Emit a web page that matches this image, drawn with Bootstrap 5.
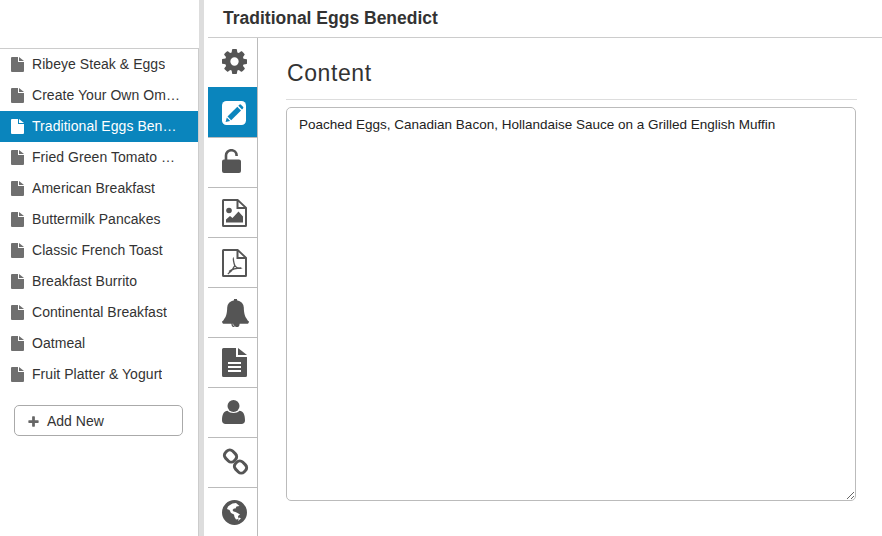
<!DOCTYPE html>
<html lang="en"><head><meta charset="utf-8"><title>Traditional Eggs Benedict</title>
<link href="https://cdn.jsdelivr.net/npm/bootstrap@5.3.0/dist/css/bootstrap.min.css" rel="stylesheet">
<style>
html,body{height:100%;overflow:hidden}
body{font-family:"Liberation Sans",Arial,sans-serif;font-size:14px;color:#333;background:#fff}
.shell{height:536px}
.side{width:199px;padding-top:48px;flex:none}
.side-list{border-top:1px solid #ccc;border-right:1px solid #ccc;height:488px}
.list-group .side-item{height:31px;padding:0 16px 0 11px;border:0;margin:0;color:#333;display:flex;align-items:center;gap:8px;background:transparent;border-radius:0;letter-spacing:.05px}
.list-group .side-item.active{background:#0a85bd;color:#fff;margin:0;border:0}
.side-item svg{width:13px;height:15px;flex:none;fill:#6f6f6f}
.side-item.active svg{fill:#fff}
.add-btn{margin:15px 15px 0 14px;height:31px;width:169px;border:1px solid #aaa;border-radius:5px;color:#333;font-size:14px;padding:1px 0 0 13px;display:flex;align-items:center;gap:8px;background:#fff}
.add-btn svg{width:11px;height:11px;fill:#666}
.divider{width:5px;background:#ddd;flex:none}
.mainpane{margin-left:4px;min-width:0}
.topbar{height:38px;border-bottom:1px solid #ccc;padding-left:15px;font-size:17.5px;font-weight:700;color:#333;line-height:37px}
.tabs{width:50px;border-right:1px solid #bbb;flex:none}
.tab-cell{height:50px;border-bottom:1px solid #bbb;padding-left:14px;display:flex;align-items:center;color:#555}
.tab-cell svg{fill:#555;display:block}
.tab-cell.before-on{border-bottom-color:#0a85bd}
.tab-cell.on{background:#0a85bd}
.tab-cell .lift{margin-top:-4px}
.tab-cell .lift-sm{margin-top:-2px}
.editor{padding:0 26px 0 28px;min-width:0}
.editor-title{font-size:23px;font-weight:400;letter-spacing:.6px;margin:0 -1px 0 0;height:62px;padding:22px 0 0 1px;line-height:27px;color:#333;border-bottom:1px solid #ddd}
.editor-area{margin-top:7px;width:570px;height:394px;border:1px solid #bbb;border-radius:5px;padding:8px 12px;font-size:13.5px;color:#222;box-shadow:none;line-height:18px;font-family:inherit}
</style></head><body>
<div class="shell d-flex">
 <div class="side">
  <div class="side-list">
   <div class="list-group list-group-flush">
    <a class="list-group-item side-item"><svg viewBox="0 0 13 15"><path d="M0 1a1 1 0 0 1 1-1h6v5h6v9a1 1 0 0 1-1 1H1a1 1 0 0 1-1-1zM8 0l5 4H8z"/></svg><span class="text-truncate">Ribeye Steak &amp; Eggs</span></a>
    <a class="list-group-item side-item"><svg viewBox="0 0 13 15"><path d="M0 1a1 1 0 0 1 1-1h6v5h6v9a1 1 0 0 1-1 1H1a1 1 0 0 1-1-1zM8 0l5 4H8z"/></svg><span class="text-truncate">Create Your Own Omelette</span></a>
    <a class="list-group-item side-item active"><svg viewBox="0 0 13 15"><path d="M0 1a1 1 0 0 1 1-1h6v5h6v9a1 1 0 0 1-1 1H1a1 1 0 0 1-1-1zM8 0l5 4H8z"/></svg><span class="text-truncate">Traditional Eggs Benedict</span></a>
    <a class="list-group-item side-item"><svg viewBox="0 0 13 15"><path d="M0 1a1 1 0 0 1 1-1h6v5h6v9a1 1 0 0 1-1 1H1a1 1 0 0 1-1-1zM8 0l5 4H8z"/></svg><span class="text-truncate">Fried Green Tomato Benedict</span></a>
    <a class="list-group-item side-item"><svg viewBox="0 0 13 15"><path d="M0 1a1 1 0 0 1 1-1h6v5h6v9a1 1 0 0 1-1 1H1a1 1 0 0 1-1-1zM8 0l5 4H8z"/></svg><span class="text-truncate">American Breakfast</span></a>
    <a class="list-group-item side-item"><svg viewBox="0 0 13 15"><path d="M0 1a1 1 0 0 1 1-1h6v5h6v9a1 1 0 0 1-1 1H1a1 1 0 0 1-1-1zM8 0l5 4H8z"/></svg><span class="text-truncate">Buttermilk Pancakes</span></a>
    <a class="list-group-item side-item"><svg viewBox="0 0 13 15"><path d="M0 1a1 1 0 0 1 1-1h6v5h6v9a1 1 0 0 1-1 1H1a1 1 0 0 1-1-1zM8 0l5 4H8z"/></svg><span class="text-truncate">Classic French Toast</span></a>
    <a class="list-group-item side-item"><svg viewBox="0 0 13 15"><path d="M0 1a1 1 0 0 1 1-1h6v5h6v9a1 1 0 0 1-1 1H1a1 1 0 0 1-1-1zM8 0l5 4H8z"/></svg><span class="text-truncate">Breakfast Burrito</span></a>
    <a class="list-group-item side-item"><svg viewBox="0 0 13 15"><path d="M0 1a1 1 0 0 1 1-1h6v5h6v9a1 1 0 0 1-1 1H1a1 1 0 0 1-1-1zM8 0l5 4H8z"/></svg><span class="text-truncate">Continental Breakfast</span></a>
    <a class="list-group-item side-item"><svg viewBox="0 0 13 15"><path d="M0 1a1 1 0 0 1 1-1h6v5h6v9a1 1 0 0 1-1 1H1a1 1 0 0 1-1-1zM8 0l5 4H8z"/></svg><span class="text-truncate">Oatmeal</span></a>
    <a class="list-group-item side-item"><svg viewBox="0 0 13 15"><path d="M0 1a1 1 0 0 1 1-1h6v5h6v9a1 1 0 0 1-1 1H1a1 1 0 0 1-1-1zM8 0l5 4H8z"/></svg><span class="text-truncate">Fruit Platter &amp; Yogurt</span></a>
   </div>
   <button type="button" class="btn add-btn"><svg viewBox="0 0 12 12"><path d="M4.500 1a.6.6 0 0 1 .6-.6h1.800a.6.6 0 0 1 .6.6v3.500H11a.6.6 0 0 1 .6.6v1.800a.6.6 0 0 1-.6.6H7.500V11a.6.6 0 0 1-.6.6H5.100a.6.6 0 0 1-.6-.6V7.500H1a.6.6 0 0 1-.6-.6V5.100a.6.6 0 0 1 .6-.6h3.500z"/></svg>Add New</button>
  </div>
 </div>
 <div class="divider"></div>
 <div class="mainpane flex-grow-1 d-flex flex-column">
  <div class="topbar">Traditional Eggs Benedict</div>
  <div class="d-flex flex-grow-1">
   <div class="tabs">
    <div class="tab-cell before-on"><svg class="lift-sm" width="25" height="25" viewBox="128 128 1536 1536"><path d="M1152 896q0-106-75-181t-181-75-181 75-75 181 75 181 181 75 181-75 75-181zm512-109v222q0 12-8 23t-20 13l-185 28q-19 54-39 91 35 50 107 138 10 12 10 25t-9 23q-27 37-99 108t-94 71q-12 0-26-9l-138-108q-44 23-91 38-16 136-29 186-7 28-36 28h-222q-14 0-24.500-8.500t-11.500-21.500l-28-184q-49-16-90-37l-141 107q-10 9-25 9-14 0-25-11-126-114-165-168-7-10-7-23 0-12 8-23 15-21 51-66.500t54-70.500q-27-50-41-99l-183-27q-13-2-21-12.500t-8-23.500v-222q0-12 8-23t19-13l186-28q14-46 39-92-40-57-107-138-10-12-10-24 0-10 9-23 26-36 98.500-107.500t94.500-71.500q13 0 26 10l138 107q44-23 91-38 16-136 29-186 7-28 36-28h222q14 0 24.500 8.500t11.500 21.500l28 184q49 16 90 37l142-107q9-9 24-9 13 0 25 10 129 119 165 170 7 8 7 22 0 12-8 23-15 21-51 66.500t-54 70.500q26 50 41 98l183 28q13 2 21 12.500t8 23.500z"/></svg></div>
    <div class="tab-cell on"><svg width="24" height="24" viewBox="0 0 24 24"><rect width="24" height="24" rx="4.500" fill="#fff"/><path d="M15.300 5.700 19 9.400 9.200 19.200 5.500 15.500z" fill="#0a85bd"/><path d="M16.300 4.700l1-1a1.200 1.200 0 0 1 1.700 0l2 2a1.200 1.200 0 0 1 0 1.700l-1 1z" fill="#0a85bd"/><path d="M4.800 16.500 8.200 19.900 3.600 21z" fill="#0a85bd"/><path d="M6.500 17.500 8 19" stroke="#fff" stroke-width=".8" fill="none"/></svg></div>
    <div class="tab-cell"><svg class="lift" width="19" height="24" viewBox="0 0 19 24"><path d="M2 10.500h15a2 2 0 0 1 2 2V22a2 2 0 0 1-2 2H2a2 2 0 0 1-2-2v-9.500a2 2 0 0 1 2-2z"/><path d="M4 11V6.500a5.300 5.300 0 0 1 10.600 0V7" fill="none" stroke="#555" stroke-width="2.600"/></svg></div>
    <div class="tab-cell"><svg width="25" height="28" viewBox="0 0 25 28"><path fill-rule="evenodd" d="M1.500 0H16l9 8.500V26.500a1.500 1.500 0 0 1-1.500 1.500h-22A1.500 1.500 0 0 1 0 26.500v-25A1.500 1.500 0 0 1 1.500 0zM2 2v24h21V10h-8.500V2zM16.500 3v5h5.300z"/><circle cx="7" cy="11.500" r="2.800"/><path d="M4 23.500v-3l4-3.500 2.500 2 6-6.500 4.500 5v6z"/></svg></div>
    <div class="tab-cell"><svg width="25" height="28" viewBox="0 0 25 28"><path fill-rule="evenodd" d="M1.500 0H16l9 8.500V26.500a1.500 1.500 0 0 1-1.500 1.500h-22A1.500 1.500 0 0 1 0 26.500v-25A1.500 1.500 0 0 1 1.500 0zM2 2v24h21V10h-8.500V2zM16.500 3v5h5.300z"/><path d="M11.800 9c-1 0 0 5 1 7.500-1.500 3.500-4 6.500-7 8.500M12.800 16.500c1 1.500 2 2 3 2.500 2 .5 4 0 4 .5M7 22.500c2-1.500 6-3.500 12-3.500" fill="none" stroke="#555" stroke-width="1.300"/></svg></div>
    <div class="tab-cell"><svg width="27" height="28" viewBox="64 64 1664 1664" preserveAspectRatio="none"><path d="M912 1696q0-16-16-16-59 0-101.500-42.500t-42.500-101.500q0-16-16-16t-16 16q0 73 51.500 124.500t124.500 51.500q16 0 16-16zm816-288q0 52-38 90t-90 38h-448q0 106-75 181t-181 75-181-75-75-181h-448q-52 0-90-38t-38-90q50-42 91-88t85-119.500 74.500-158.500 50-206 19.500-260q0-152 117-282.500t307-158.500q-8-19-8-39 0-40 28-68t68-28 68 28 28 68q0 20-8 39 190 28 307 158.500t117 282.500q0 139 19.500 260t50 206 74.500 158.500 85 119.500 91 88z"/></svg></div>
    <div class="tab-cell"><svg width="25" height="29" viewBox="0 0 25 29"><path fill-rule="evenodd" d="M1.500 0H14v9h11v18.500a1.500 1.500 0 0 1-1.500 1.500h-22A1.500 1.500 0 0 1 0 27.500v-26A1.500 1.500 0 0 1 1.500 0zM6 14v2h13v-2zM6 18v2h13v-2zM6 22v2h13v-2z"/><path d="M16 0l9 7h-9z"/></svg></div>
    <div class="tab-cell"><svg class="lift-sm" width="23" height="24" viewBox="0 0 23 24"><circle cx="11.500" cy="6" r="6"/><path d="M5.500 10.800c1.500 1.500 3.500 2.200 6 2.200s4.500-.7 6-2.200c3.500 0 5.500 3.500 5.500 9.700 0 2.300-1.500 3.500-3.500 3.500h-16C1.500 24 0 22.800 0 20.500c0-6.200 2-9.700 5.500-9.700z"/></svg></div>
    <div class="tab-cell"><svg class="lift-sm" width="27" height="27" viewBox="0 0 27 27"><g fill="none" stroke="#555" stroke-width="3"><rect x="2.500" y="3" width="12" height="10" rx="4" transform="rotate(45 8.500 8)"/><rect x="12.500" y="14" width="12" height="10" rx="4" transform="rotate(45 18.500 19)"/></g></svg></div>
    <div class="tab-cell"><svg width="25" height="25" viewBox="0 0 25 25"><path fill-rule="evenodd" d="M12.500 0a12.500 12.500 0 1 1 0 25 12.500 12.500 0 0 1 0-25zM6 6.500 5 9l2.500 1 1.500 3 3 1.500.5 2.500 1.500 2.500 2.500-.5-.5-3 2-1.500-2.500-1.500-2-1-2-.5-1-1.500 1.500-1.500h1.500l1-2 3-.5L14 3 10.500 3.500 8 5zM17 17.500l-1 3.500 3-2.500z"/></svg></div>
   </div>
   <div class="editor flex-grow-1">
    <h2 class="editor-title">Content</h2>
    <textarea class="form-control editor-area" aria-label="Content">Poached Eggs, Canadian Bacon, Hollandaise Sauce on a Grilled English Muffin</textarea>
   </div>
  </div>
 </div>
</div>
<script src="https://cdn.jsdelivr.net/npm/bootstrap@5.3.0/dist/js/bootstrap.bundle.min.js"></script>
</body></html>
